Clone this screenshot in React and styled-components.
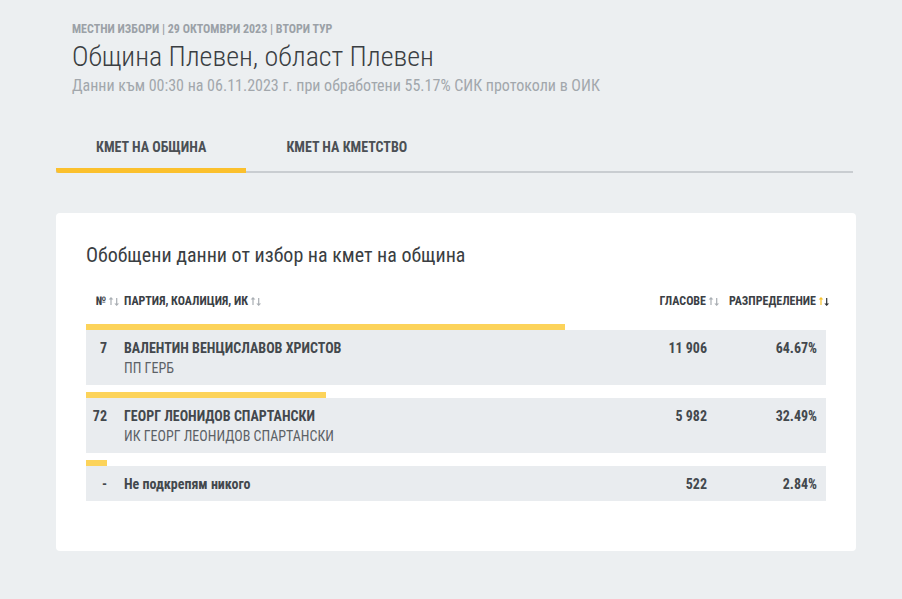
import React from 'react';
import styled, { createGlobalStyle } from 'styled-components';

const GlobalStyle = createGlobalStyle`
  html, body {
    margin: 0;
    padding: 0;
    background: #eceff1;
    font-family: "Roboto Condensed", Roboto, "Liberation Sans", sans-serif;
    color: #3b4045;
  }
`;

const Page = styled.div`
  width: 800px;
  margin-left: 56px;
  padding-top: 20px;
  padding-bottom: 48px;
`;

const Header = styled.header`
  padding-left: 16px;
`;

const Kicker = styled.div`
  font-size: 12px;
  font-weight: 700;
  line-height: 18px;
  color: #9ba1a7;
`;

const Title = styled.h1`
  margin: 0;
  font-size: 28px;
  font-weight: 300;
  line-height: 37px;
  color: #3a3e42;
`;

const Subtitle = styled.div`
  font-size: 16px;
  line-height: 20px;
  margin-top: 1px;
  color: #a2a7ac;
`;

const Tabs = styled.nav`
  display: flex;
  margin-top: 26px;
  margin-right: 3px;
  border-bottom: 2px solid #c9cdd1;
`;

const Tab = styled.div`
  padding: 15px 40px 11px;
  font-size: 14px;
  font-weight: 700;
  line-height: 20px;
  color: #4b5055;
  margin-bottom: -2px;
  border-bottom: 5px solid ${p => (p.active ? '#fbc02d' : 'transparent')};
  border-radius: 0 0 0 3px;
`;

const Card = styled.section`
  margin-top: 40px;
  background: #fff;
  border-radius: 4px;
  padding: 30px 30px 50px;
`;

const CardTitle = styled.h2`
  margin: 0;
  font-size: 20px;
  font-weight: 400;
  line-height: 24px;
  color: #3a3e42;
`;

const Grid = styled.div`
  display: grid;
  grid-template-columns: 21px 1fr 100px 110px;
  padding-right: 9px;
`;

const HeadRow = styled(Grid)`
  margin-top: 22px;
  height: 24px;
  align-items: center;
  margin-bottom: 11px;
`;

const HeadCell = styled.div`
  display: flex;
  align-items: center;
  justify-content: ${p => (p.right ? 'flex-end' : 'flex-start')};
  margin-right: ${p => (p.right ? '-13px' : '0')};
  padding-left: ${p => (p.pad ? '17px' : '0')};
  font-size: 12px;
  font-weight: 700;
  color: #3b4045;
  white-space: nowrap;
`;

const Entry = styled.div`
  & + & {
    margin-top: 7px;
  }
`;

const Bar = styled.div`
  height: 6px;
  background: #fcd35a;
`;

const Row = styled(Grid)`
  background: #e9ecef;
  padding-top: 8px;
  padding-bottom: 7px;
  font-size: 14px;
  line-height: 20px;
`;

const Num = styled.div`
  text-align: right;
  font-weight: 700;
  color: #43484d;
`;

const Name = styled.div`
  padding-left: 17px;
`;

const Candidate = styled.div`
  font-weight: 700;
  color: #43484d;
`;

const Party = styled.div`
  color: #5c6166;
`;

const Value = styled.div`
  text-align: right;
  font-weight: 700;
  color: #43484d;
`;

function SortIcon({ up = '#a9aeb3', down = '#a9aeb3' }) {
  return (
    <svg width="12" height="11" viewBox="0 0 12 11" style={{ marginLeft: 2 }}>
      <path d="M3 1 L0.6 3.6 H2.4 V9 H3.6 V3.6 H5.4 Z" fill={up} />
      <path d="M8.7 10 L6.3 7.4 H8.1 V2 H9.3 V7.4 H11.1 Z" fill={down} />
    </svg>
  );
}

const rows = [
  { n: '7', name: 'ВАЛЕНТИН ВЕНЦИСЛАВОВ ХРИСТОВ', party: 'ПП ГЕРБ', votes: '11 906', pct: 64.67 },
  { n: '72', name: 'ГЕОРГ ЛЕОНИДОВ СПАРТАНСКИ', party: 'ИК ГЕОРГ ЛЕОНИДОВ СПАРТАНСКИ', votes: '5 982', pct: 32.49 },
  { n: '-', name: 'Не подкрепям никого', votes: '522', pct: 2.84 },
];

export default function App() {
  return (
    <>
      <GlobalStyle />
      <Page>
        <Header>
          <Kicker>МЕСТНИ ИЗБОРИ | 29 ОКТОМВРИ 2023 | ВТОРИ ТУР</Kicker>
          <Title>Община Плевен, област Плевен</Title>
          <Subtitle>Данни към 00:30 на 06.11.2023 г. при обработени 55.17% СИК протоколи в ОИК</Subtitle>
        </Header>
        <Tabs>
          <Tab active>КМЕТ НА ОБЩИНА</Tab>
          <Tab>КМЕТ НА КМЕТСТВО</Tab>
        </Tabs>
        <Card>
          <CardTitle>Обобщени данни от избор на кмет на община</CardTitle>
          <HeadRow>
            <HeadCell right>№<SortIcon /></HeadCell>
            <HeadCell pad>ПАРТИЯ, КОАЛИЦИЯ, ИК<SortIcon /></HeadCell>
            <HeadCell right>ГЛАСОВЕ<SortIcon /></HeadCell>
            <HeadCell right>РАЗПРЕДЕЛЕНИЕ<SortIcon up="#f5c12c" down="#2f3337" /></HeadCell>
          </HeadRow>
          {rows.map(r => (
            <Entry key={r.n}>
              <Bar style={{ width: `${r.pct}%` }} />
              <Row>
                <Num>{r.n}</Num>
                <Name>
                  <Candidate>{r.name}</Candidate>
                  {r.party && <Party>{r.party}</Party>}
                </Name>
                <Value>{r.votes}</Value>
                <Value>{r.pct.toFixed(2)}%</Value>
              </Row>
            </Entry>
          ))}
        </Card>
      </Page>
    </>
  );
}
